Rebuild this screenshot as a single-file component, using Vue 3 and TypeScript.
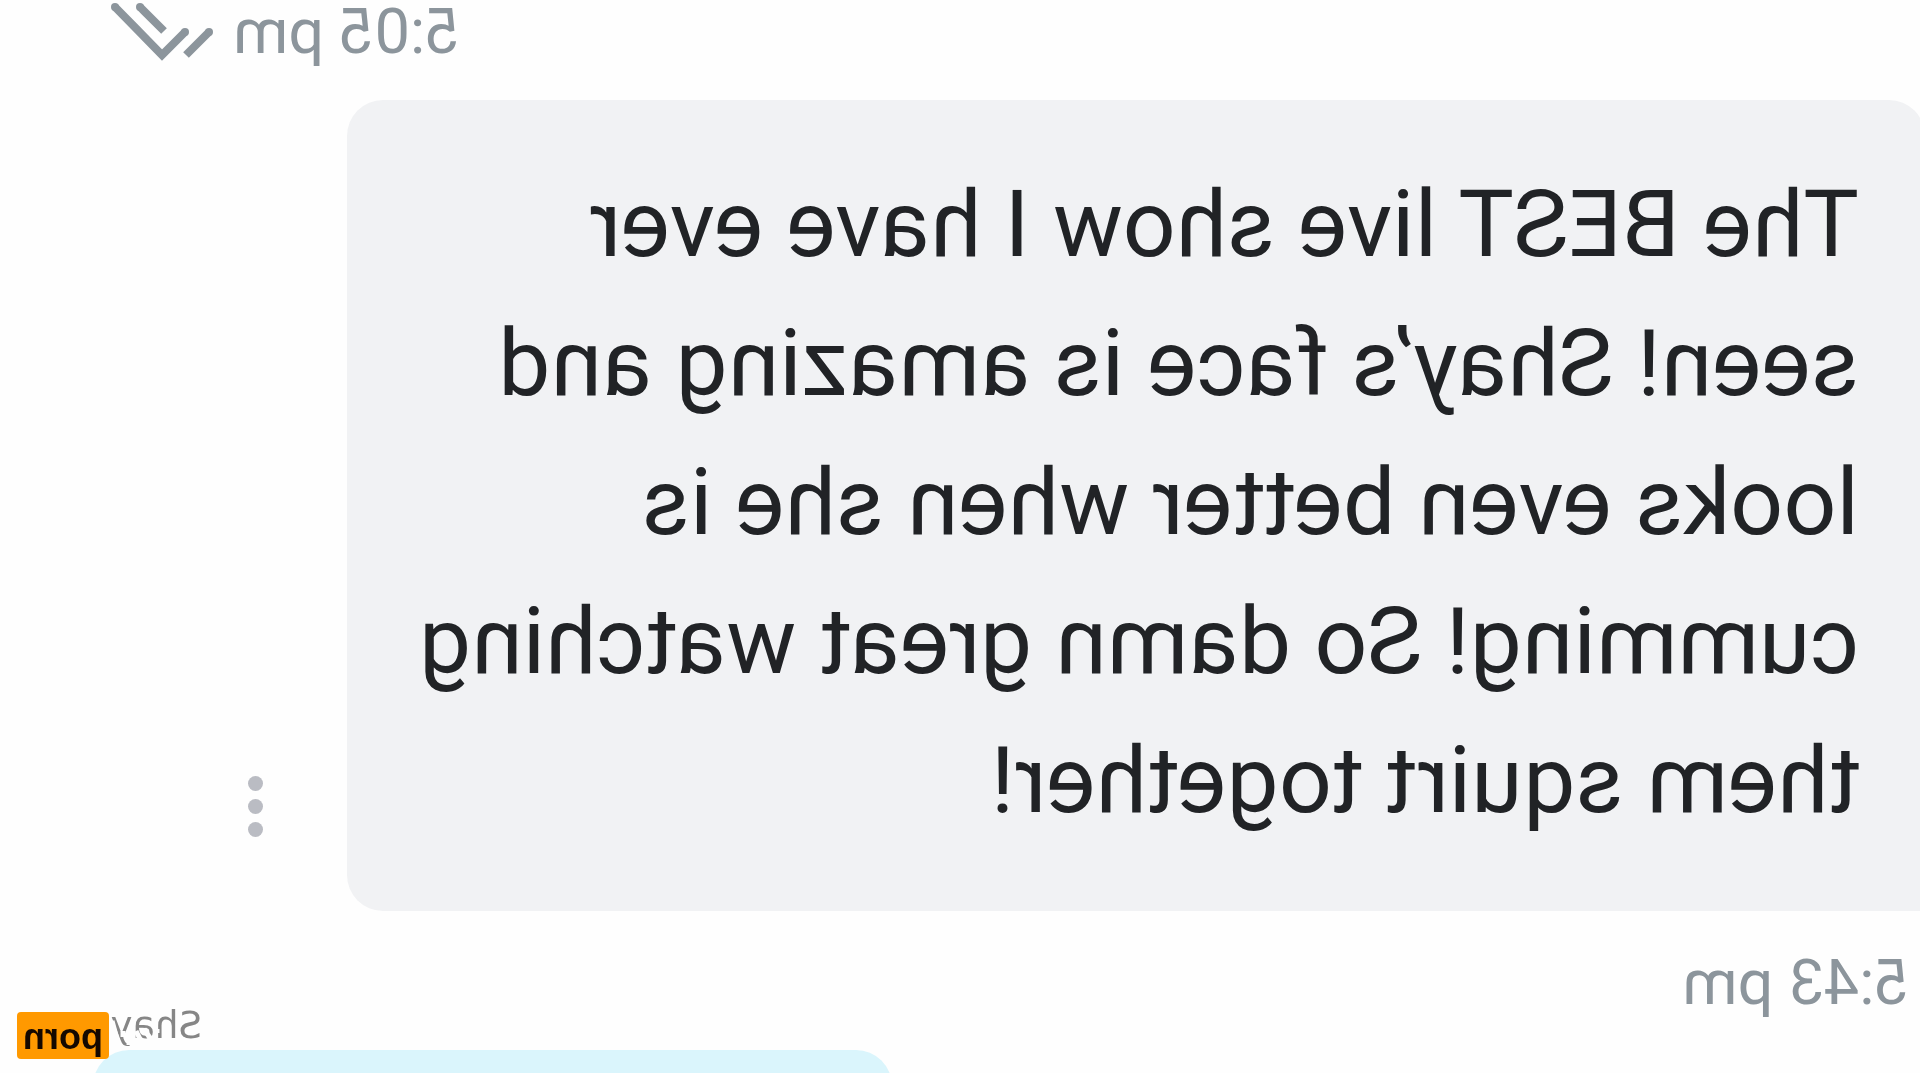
<script setup lang="ts">
const message: string[] = [
  'The BEST live show I have ever',
  'seen! Shay’s face is amazing and',
  'looks even better when she is',
  'cumming! So damn great watching',
  'them squirt together!',
]
</script>

<template>
  <main class="chat">
    <div class="sent-meta">
      <time>5:05 pm</time>
      <svg width="106" height="62" viewBox="0 0 106 62" fill="none" stroke="#8c959c" stroke-width="8" aria-label="Read">
        <path d="M6 32 L29 55 M51 31 L75 7" />
        <path d="M30 32 L53 55 L100 7" />
        <g fill="#8c959c" stroke="none">
          <circle cx="6" cy="32" r="4" />
          <circle cx="30" cy="32" r="4" />
          <circle cx="75" cy="7" r="4" />
          <circle cx="100" cy="7" r="4" />
        </g>
      </svg>
    </div>
    <div class="row">
      <p class="bubble">
        <span v-for="line in message" :key="line" class="line">{{ line }}</span>
      </p>
      <button class="more" type="button" aria-label="More options">
        <i></i><i></i><i></i>
      </button>
    </div>
    <time class="received">5:43 pm</time>
    <div class="reply">
      <span class="author">Shay</span>
      <div class="reply-bubble"></div>
      <svg class="mark" width="70" height="40" viewBox="0 0 70 40" fill="none" stroke="#fefefe" stroke-width="5" aria-hidden="true">
        <path d="M58 10 L52 32 M41 34 V22 M47 20 V26 M34 20 L28 32 M26 18 L18 30 M13 18 V22" />
      </svg>
      <div class="badge">porn</div>
    </div>
  </main>
</template>

<style>
body {
  margin: 0;
  background: #fefefe;
}
</style>

<style scoped>
.chat {
  box-sizing: border-box;
  height: 100vh;
  overflow: hidden;
  display: flex;
  flex-direction: column;
  font-family: Roboto, sans-serif;
  color: #212326;
  transform: scaleX(-1);
}
time {
  font-size: 63px;
  line-height: 64px;
  color: #8c959c;
}
.sent-meta {
  display: flex;
  justify-content: flex-end;
  gap: 18px;
  padding-right: 109px;
  margin-bottom: 36px;
}
.row {
  display: flex;
  align-items: flex-end;
  gap: 84px;
  margin-left: -5px;
}
.bubble {
  box-sizing: border-box;
  flex: 1;
  margin: 0;
  padding: 55px 60px 61px 66px;
  border-radius: 36px 36px 36px 0;
  background: #f1f2f4;
  font-size: 93px;
  line-height: 139px;
  white-space: nowrap;
}
.line {
  display: block;
}
.more {
  display: flex;
  flex-direction: column;
  gap: 8px;
  margin: 0 248px 74px 0;
  padding: 0;
  border: 0;
  background: none;
}
.more i {
  width: 15px;
  height: 15px;
  border-radius: 50%;
  background: #babcc3;
}
.received {
  margin: 40px 0 0 10px;
}
.reply {
  position: relative;
  display: flex;
  flex-direction: column;
  margin-top: -4px;
}
.author {
  align-self: flex-end;
  width: 185px;
  margin-right: 17px;
  font-family: "DejaVu Sans", sans-serif;
  font-size: 37px;
  line-height: 30px;
  color: #868686;
}
.reply-bubble {
  align-self: flex-end;
  width: 799px;
  height: 90px;
  margin: 9px 93px 0 0;
  border-radius: 36px;
  background: #daf5fc;
}
.mark {
  position: absolute;
  right: 100px;
  top: 0;
}
.badge {
  position: absolute;
  right: 17px;
  top: 1px;
  width: 92px;
  height: 47px;
  border-radius: 4px;
  background: #ff9900;
  color: #140800;
  font: bold 36px/49px "Liberation Sans", sans-serif;
  text-align: center;
}
</style>
